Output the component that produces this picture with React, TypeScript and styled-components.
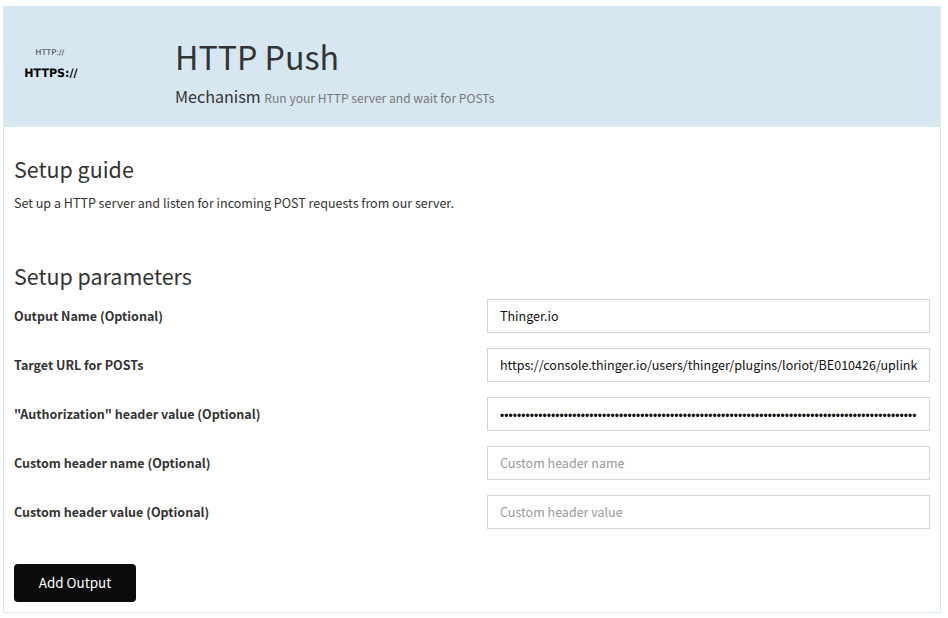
import React from "react";
import styled, { createGlobalStyle } from "styled-components";

const GlobalStyle = createGlobalStyle`
  *, *::before, *::after { box-sizing: border-box; }
  body {
    margin: 0;
    background: #fff;
    color: #333;
    font: 12.53px/20px "Noto Sans CJK SC", "Noto Sans", sans-serif;
  }
`;

const Panel = styled.main`
  width: 938px;
  height: 607px;
  margin: 6px 0 0 3px;
  border: 1px solid #d7e7f1;
`;

const Header = styled.header`
  display: flex;
  height: 120px;
  background: #d7e7f1;
`;

const Logo = styled.div`
  width: 171px;
  padding: 38px 0 0 20px;
  flex: none;
`;

const Title = styled.h1`
  margin: 28px 0 0;
  font-size: 32.2px;
  line-height: 42px;
  font-weight: 400;
`;

const Subtitle = styled.p`
  margin: 7px 0 0;
  font-size: 16.1px;
  line-height: 24px;
`;

const Hint = styled.small`
  color: #777;
  font-size: 12.08px;
`;

const Section = styled.section<{ $top: number }>`
  padding: ${(p) => p.$top}px 10px 0;
`;

const Heading = styled.h2`
  margin: 0;
  font-size: 21.45px;
  line-height: 28px;
  font-weight: 400;
`;

const Text = styled.p`
  margin: 10px 0 0;
`;

const Form = styled.form`
  display: grid;
  gap: 15px;
  margin-top: 9px;
`;

const Field = styled.label`
  display: grid;
  grid-template-columns: 473px 443px;
  align-items: center;
  height: 34px;
  font-weight: 700;
`;

const Input = styled.input`
  width: 443px;
  height: 34px;
  padding: 0 12px 2px;
  border: 1px solid #d2d2de;
  border-radius: 0;
  background: #fff;
  color: #111;
  font: 400 12.53px/20px "Noto Sans CJK SC", "Noto Sans", sans-serif;
  &::placeholder { color: #999; opacity: 1; }
  &[type="password"] {
    padding: 3px 12px 0;
    font-family: "Liberation Sans", sans-serif;
    font-size: 12px;
    letter-spacing: 0.05px;
  }
`;

const Button = styled.button`
  justify-self: start;
  width: 122px;
  height: 38px;
  margin-top: 20px;
  padding: 0 0 2px;
  border: 0;
  border-radius: 4px;
  background: #0b0b0b;
  color: #fff;
  font: 400 13.42px/20px "Noto Sans CJK SC", "Noto Sans", sans-serif;
`;

const fields = [
  { label: "Output Name (Optional)", type: "text", value: "Thinger.io" },
  {
    label: "Target URL for POSTs",
    type: "text",
    value: "https://console.thinger.io/users/thinger/plugins/loriot/BE010426/uplink",
  },
  { label: "\"Authorization\" header value (Optional)", type: "password", value: "x".repeat(160) },
  { label: "Custom header name (Optional)", type: "text", placeholder: "Custom header name" },
  { label: "Custom header value (Optional)", type: "text", placeholder: "Custom header value" },
];

const HttpLogo = () => (
  <svg width="56" height="38" viewBox="0 0 56 38" fontFamily="DejaVu Sans" textRendering="geometricPrecision" role="img">
    <text x="11.3" y="10.2" fontSize="8" fill="#444" textLength="29" lengthAdjust="spacingAndGlyphs">HTTP://</text>
    <text x="0.3" y="32" fontSize="11.5" fontWeight="700" fill="#000" textLength="53.3" lengthAdjust="spacingAndGlyphs">HTTPS://</text>
  </svg>
);

export default function App() {
  return (
    <>
      <GlobalStyle />
      <Panel>
        <Header>
          <Logo><HttpLogo /></Logo>
          <div>
            <Title>HTTP Push</Title>
            <Subtitle>Mechanism <Hint>Run your HTTP server and wait for POSTs</Hint></Subtitle>
          </div>
        </Header>
        <Section $top={28}>
          <Heading>Setup guide</Heading>
          <Text>Set up a HTTP server and listen for incoming POST requests from our server.</Text>
        </Section>
        <Section $top={49}>
          <Heading>Setup parameters</Heading>
          <Form>
            {fields.map(({ label, type, value, placeholder }) => (
              <Field key={label}>
                {label}
                <Input type={type} defaultValue={value} placeholder={placeholder} />
              </Field>
            ))}
            <Button type="button">Add Output</Button>
          </Form>
        </Section>
      </Panel>
    </>
  );
}
